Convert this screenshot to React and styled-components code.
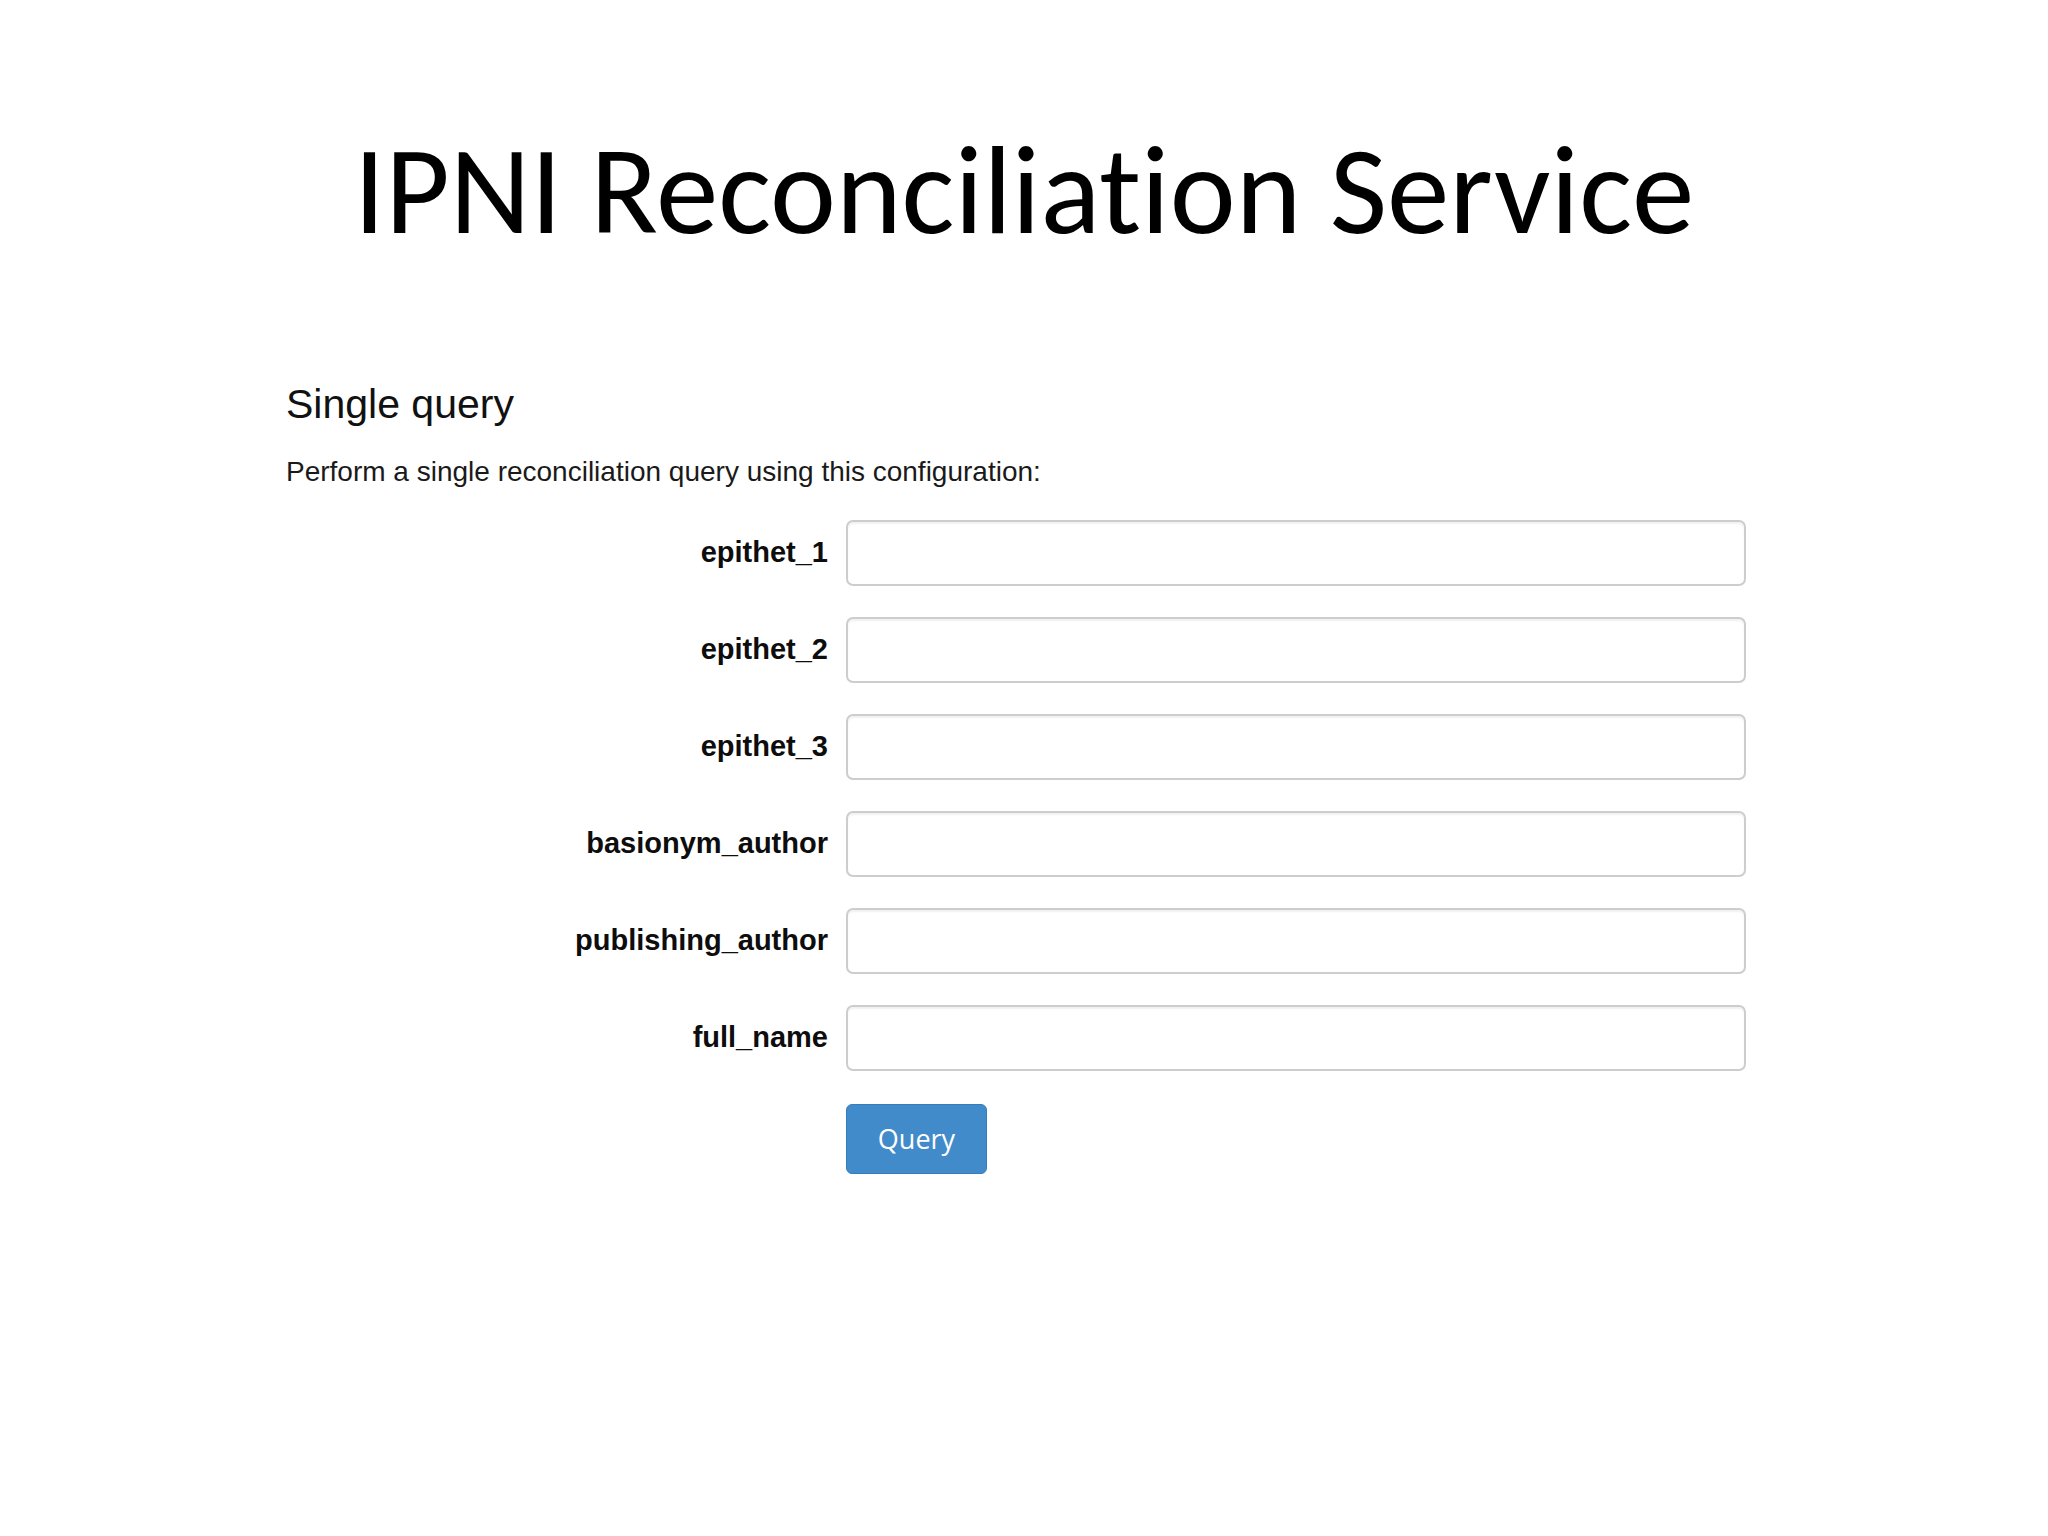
import styled, { createGlobalStyle } from "styled-components";

const GlobalStyle = createGlobalStyle`
  html, body {
    margin: 0;
    padding: 0;
    background: #ffffff;
  }
  * {
    box-sizing: border-box;
  }
`;

const Slide = styled.div`
  width: 2048px;
  height: 1536px;
  display: flex;
  flex-direction: column;
  background: #ffffff;
`;

const SlideTitle = styled.h1`
  margin: 116px 0 0;
  text-align: center;
  font-family: "Carlito", "Lato", sans-serif;
  font-weight: 400;
  font-size: 125px;
  font-variant-ligatures: none;
  line-height: 1.2;
  color: #000;
`;

const FormPanel = styled.section`
  margin: 118px 0 0 286px;
  width: 1460px;
  font-family: "Liberation Sans", Arial, sans-serif;
  color: #111;
`;

const Heading = styled.h2`
  margin: 0;
  font-size: 41px;
  font-weight: 400;
  line-height: 1;
`;

const Lead = styled.p`
  margin: 30px 0 0;
  font-size: 28px;
  line-height: 1.2;
  color: #1a1a1a;
`;

const Fields = styled.div`
  margin-top: 31px;
  display: grid;
  grid-template-columns: 542px 1fr;
  column-gap: 18px;
  row-gap: 31px;
  align-items: center;
`;

const Label = styled.label`
  text-align: right;
  font-size: 29px;
  font-weight: 700;
  color: #0d0d0d;
`;

const TextInput = styled.input`
  height: 66px;
  width: 100%;
  border: 2px solid #cdcdd0;
  border-radius: 7px;
  background: #fff;
  box-shadow: inset 0 2px 2px rgba(0, 0, 0, 0.06);
  font-size: 26px;
  padding: 0 16px;
  outline: none;
`;

const QueryButton = styled.button`
  grid-column: 2;
  justify-self: start;
  width: 141px;
  height: 70px;
  margin-top: 2px;
  border: 1px solid #357ebd;
  border-radius: 6px;
  background: #428bca;
  color: #fff;
  font-family: "Open Sans", "Liberation Sans", sans-serif;
  font-size: 27px;
  font-weight: 400;
  cursor: pointer;
`;

const fields = [
  "epithet_1",
  "epithet_2",
  "epithet_3",
  "basionym_author",
  "publishing_author",
  "full_name",
];

export default function App() {
  return (
    <Slide>
      <GlobalStyle />
      <SlideTitle>IPNI Reconciliation Service</SlideTitle>
      <FormPanel>
        <Heading>Single query</Heading>
        <Lead>Perform a single reconciliation query using this configuration:</Lead>
        <Fields>
          {fields.map((name) => [
            <Label key={name + "-label"} htmlFor={name}>
              {name}
            </Label>,
            <TextInput key={name} id={name} name={name} type="text" />,
          ])}
          <QueryButton type="button">Query</QueryButton>
        </Fields>
      </FormPanel>
    </Slide>
  );
}
